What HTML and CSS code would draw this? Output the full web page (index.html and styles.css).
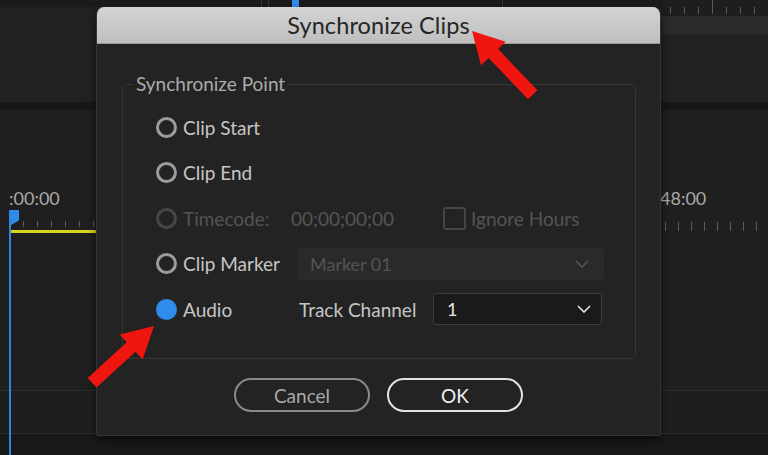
FILE: index.html
```html
<!DOCTYPE html>
<html lang="en">
<head>
<meta charset="utf-8">
<title>Synchronize Clips</title>
<link rel="stylesheet" href="styles.css">
</head>
<body>
<div class="screen">
  <div class="bg">
    <div class="bg-head">
      <div class="pane-main">
        <div class="strip">
          <span class="vline"></span>
          <span class="vline second"></span>
          <span class="blue-mark"></span>
          <span class="vline far"></span>
        </div>
      </div>
      <div class="pane-side">
        <div class="side-ruler">
          <span class="tick"></span><span class="tick"></span><span class="tick"></span>
          <span class="tick tall"></span><span class="tick"></span><span class="tick"></span><span class="tick"></span>
        </div>
        <div class="side-band"></div>
      </div>
    </div>
    <div class="bg-band"></div>
    <div class="bg-time">
      <div class="tl-left">
        <div class="time-label">:00:00</div>
        <div class="ruler-left">
          <span class="playhead"></span>
          <span class="ticks">
            <span class="tick"></span><span class="tick"></span><span class="tick"></span><span class="tick"></span><span class="tick"></span><span class="tick"></span>
          </span>
        </div>
        <div class="yellow"></div>
      </div>
      <div class="tl-right">
        <div class="time-label">48:00</div>
        <div class="ruler-right">
          <span class="tick"></span><span class="tick"></span><span class="tick"></span><span class="tick"></span><span class="tick"></span><span class="tick"></span><span class="tick"></span><span class="tick"></span>
        </div>
      </div>
    </div>
    <div class="bg-lower"></div>
    <div class="bg-bottom"></div>
  </div>

  <div class="dialog">
    <div class="titlebar">Synchronize Clips</div>
    <div class="dialog-body">
      <fieldset class="group">
        <legend>Synchronize Point</legend>
        <div class="rows">
          <div class="row">
            <label class="opt"><span class="radio"></span>Clip Start</label>
          </div>
          <div class="row">
            <label class="opt"><span class="radio"></span>Clip End</label>
          </div>
          <div class="row disabled">
            <label class="opt"><span class="radio"></span>Timecode:</label>
            <span class="tc-value">00;00;00;00</span>
            <label class="check"><span class="box"></span>Ignore Hours</label>
          </div>
          <div class="row">
            <label class="opt"><span class="radio"></span>Clip Marker</label>
            <div class="select select-disabled">
              <span>Marker 01</span>
              <svg class="chev" width="14" height="8" viewBox="0 0 14 8"><path d="M1 1 L7 7 L13 1" fill="none" stroke="currentColor" stroke-width="1.6"/></svg>
            </div>
          </div>
          <div class="row">
            <label class="opt"><span class="radio on"></span>Audio</label>
            <span class="field-label">Track Channel</span>
            <div class="select select-track">
              <span>1</span>
              <svg class="chev" width="14" height="8" viewBox="0 0 14 8"><path d="M1 1 L7 7 L13 1" fill="none" stroke="currentColor" stroke-width="1.6"/></svg>
            </div>
          </div>
        </div>
      </fieldset>
      <div class="buttons">
        <button class="btn btn-cancel">Cancel</button>
        <button class="btn btn-ok">OK</button>
      </div>
    </div>
  </div>

  <svg class="arrows" width="768" height="455" viewBox="0 0 768 455">
    <g transform="translate(472 31) rotate(46.4)">
      <polygon points="0,0 31,-17 31,-6.5 88,-6.5 88,6.5 31,6.5 31,17" fill="#ef1610"/>
    </g>
    <g transform="translate(154 326) rotate(137.5)">
      <polygon points="0,0 31,-17 31,-6.5 84,-6.5 84,6.5 31,6.5 31,17" fill="#ef1610"/>
    </g>
  </svg>
</div>
</body>
</html>
```

FILE: styles.css
```css
* { box-sizing: border-box; }

html, body {
  margin: 0;
  padding: 0;
  background: #1f1f1f;
}

body {
  font-family: "Lato", "Noto Sans", sans-serif;
  width: 768px;
  height: 455px;
  overflow: hidden;
}

.screen {
  position: relative;
  width: 768px;
  height: 455px;
}

/* ---------- background (editor behind the modal) ---------- */
.bg {
  display: flex;
  flex-direction: column;
  height: 100%;
  position: relative;
}

.bg::after {
  /* playhead line running down the timeline */
  content: "";
  position: absolute;
  left: 9px;
  top: 212px;
  bottom: 0;
  width: 2px;
  background: #2f86de;
}

.bg-head {
  display: flex;
  height: 102px;
}

.pane-main {
  width: 662px;
  background: #212121;
}

.strip {
  display: flex;
  height: 7px;
  padding-left: 261px;
  background: #1b1b1b;
}

.vline {
  width: 1px;
  height: 100%;
  background: #353535;
}
.vline.second { margin-left: 6px; }
.vline.far { margin-left: 203px; }

.blue-mark {
  width: 7px;
  height: 100%;
  margin-left: 23px;
  background: #2f8de9;
}

.pane-side {
  flex: 1;
  display: flex;
  flex-direction: column;
  background: #212121;
}

.side-ruler {
  display: flex;
  align-items: flex-end;
  height: 16px;
  padding: 0 0 2px 8px;
  background: #1e1e1e;
}

.side-ruler .tick {
  width: 1px;
  height: 7px;
  margin-right: 13px;
  background: #5a5a5a;
}
.side-ruler .tick.tall { height: 15px; }

.side-band {
  height: 19px;
  background: #2a2a2a;
}

.bg-band {
  height: 8px;
  background: #171717;
}

.bg-time {
  display: flex;
  justify-content: space-between;
  height: 280px;
  background: #1f1f1f;
}

.time-label {
  font-family: "Lato", sans-serif;
  font-size: 18px;
  line-height: 20px;
  color: #a9a9a9;
}

.tl-left {
  width: 96px;
  padding-top: 78px;
  padding-left: 9px;
}

.ruler-left {
  display: flex;
  align-items: flex-start;
  height: 20px;
  margin-top: 2px;
}

.playhead {
  width: 10px;
  height: 15px;
  background: #2f8de9;
  clip-path: polygon(0 0, 100% 0, 100% 70%, 20% 100%, 0 100%);
}

.ticks {
  display: flex;
  gap: 13px;
  padding-left: 4px;
  padding-top: 11px;
}

.ticks .tick {
  width: 1px;
  height: 6px;
  background: #5c5c5c;
}

.yellow {
  height: 3px;
  margin-left: 1px;
  background: #dcd51f;
}

.tl-right {
  width: 108px;
  padding-top: 78px;
}

.ruler-right {
  display: flex;
  gap: 12px;
  padding-left: 5px;
  margin-top: 14px;
}

.ruler-right .tick {
  width: 1px;
  height: 9px;
  background: #5c5c5c;
}

.bg-lower {
  height: 43px;
  border-top: 1px solid #2f2f2f;
  background: #1e1e1e;
}

.bg-bottom {
  flex: 1;
  border-top: 1px solid #2c2c2c;
  background: #191919;
}

/* ---------- dialog (modal over the editor) ---------- */
.dialog {
  position: absolute;
  left: 96px;
  top: 7px;
  width: 565px;
  height: 429px;
  display: flex;
  flex-direction: column;
  background: #232323;
  border-radius: 8px 8px 2px 2px;
  border: 1px solid #353535;
  border-top: none;
  box-shadow: 0 4px 10px rgba(0, 0, 0, 0.55);
  overflow: hidden;
}

.titlebar {
  height: 37px;
  flex: none;
  display: flex;
  align-items: center;
  justify-content: center;
  padding-bottom: 1px;
  background: linear-gradient(#d4d4d4, #bebebe);
  border-bottom: 1px solid #9a9a9a;
  color: #262626;
  font-size: 23.5px;
  letter-spacing: 0.1px;
}

.dialog-body {
  flex: 1;
  display: flex;
  flex-direction: column;
}

.group {
  margin: 29px 24px 0 25px;
  padding: 16px 0 33px 33px;
  border: 1px solid #363636;
  border-radius: 5px;
  min-width: 0;
}

.group legend {
  margin-left: -23px;
  padding: 0 3px;
  font-size: 19px;
  line-height: 22px;
  color: #ababab;
}

.rows {
  display: flex;
  flex-direction: column;
  gap: 13.5px;
}

.row {
  display: flex;
  align-items: center;
  height: 32px;
  font-size: 19px;
  color: #c6c6c6;
}

.opt {
  display: flex;
  align-items: center;
  gap: 6px;
  width: 135px;
  flex: none;
}

.radio {
  width: 21px;
  height: 21px;
  border-radius: 50%;
  border: 3px solid #9c9c9c;
  flex: none;
}

.radio.on {
  border: none;
  background: #2f8ceb;
}

.row.disabled { color: #545454; }
.row.disabled .radio { border-color: #474747; }

.tc-value {
  width: 152px;
  flex: none;
}

.check {
  display: flex;
  align-items: center;
  gap: 5px;
}

.box {
  width: 23px;
  height: 23px;
  border: 2px solid #454545;
  border-radius: 3px;
}

.select {
  display: flex;
  align-items: center;
  justify-content: space-between;
  height: 32px;
  border-radius: 3px;
  font-size: 18px;
}

.select-disabled {
  width: 307px;
  margin-left: 6px;
  padding: 0 15px 0 13px;
  background: #2a2a2a;
  color: #545454;
}

.field-label {
  margin-left: 8px;
  width: 134px;
  flex: none;
}

.select-track {
  width: 169px;
  padding: 0 10px 0 13px;
  background: #1a1a1a;
  border: 1px solid #3d3d3d;
  color: #e6e6e6;
}

.chev { display: block; }

.buttons {
  display: flex;
  justify-content: center;
  gap: 17px;
  margin-top: 19px;
}

.btn {
  width: 136px;
  height: 34px;
  border-radius: 17px;
  background: transparent;
  font-family: "Lato", "Noto Sans", sans-serif;
  font-size: 19px;
  padding: 0;
}

.btn-cancel {
  border: 2px solid #8a8a8a;
  color: #a8a8a8;
}

.btn-ok {
  border: 2px solid #e2e2e2;
  color: #f2f2f2;
}

/* ---------- annotation arrows overlay ---------- */
.arrows {
  position: absolute;
  left: 0;
  top: 0;
  pointer-events: none;
}
```
